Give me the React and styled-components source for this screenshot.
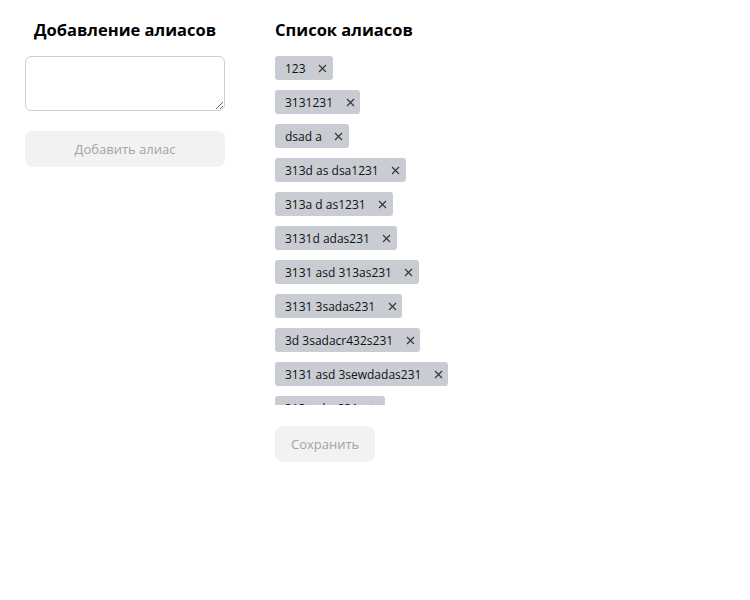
import styled, { createGlobalStyle } from 'styled-components';

const aliases = [
  '123',
  '3131231',
  'dsad a',
  '313d as dsa1231',
  '313a d as1231',
  '3131d adas231',
  '3131 asd 313as231',
  '3131 3sadas231',
  '3d 3sadacr432s231',
  '3131 asd 3sewdadas231',
  '313sadas231',
];

function CrossIcon() {
  return (
    <svg width='9' height='9' viewBox='0 0 9 9'>
      <path d='M1 1 L8 8 M8 1 L1 8' stroke='#333' strokeWidth='1.1' fill='none' />
    </svg>
  );
}

function App() {
  return (
    <>
      <GlobalStyle />
      <S.Page>
        <S.Column>
          <S.Title $center>Добавление алиасов</S.Title>
          <S.TextArea />
          <S.Button $wide disabled>
            Добавить алиас
          </S.Button>
        </S.Column>
        <S.Column>
          <S.Title>Список алиасов</S.Title>
          <S.List>
            {aliases.map((a, i) => (
              <S.Tag key={i}>
                <span>{a}</span>
                <S.Remove>
                  <CrossIcon />
                </S.Remove>
              </S.Tag>
            ))}
          </S.List>
          <S.Button disabled>Сохранить</S.Button>
        </S.Column>
      </S.Page>
    </>
  );
}

// -------------------------------------------------- styling ----------------------------------------------
const GlobalStyle = createGlobalStyle`
  body {
    margin: 0;
    background: #fff;
    font-family: 'Open Sans', 'Noto Sans', sans-serif;
    color: #000;
  }
`;

const S = {};
S.Page = styled.div`
  display: flex;
  gap: 50px;
  padding: 18px 25px;
`;

S.Column = styled.div`
  width: 200px;
  display: flex;
  flex-direction: column;
  align-items: flex-start;
`;

S.Title = styled.h2`
  margin: 0 0 14px;
  width: 100%;
  font-size: 16.5px;
  line-height: 24px;
  font-weight: 700;
  text-align: ${(p) => (p.$center ? 'center' : 'left')};
`;

S.TextArea = styled.textarea`
  box-sizing: border-box;
  width: 200px;
  height: 55px;
  border: 1px solid #cfcfcf;
  border-radius: 6px;
  margin: 0 0 20px;
  padding: 6px 8px;
  font-family: inherit;
  outline: 0;
`;

S.Button = styled.button`
  box-sizing: border-box;
  height: 36px;
  width: ${(p) => (p.$wide ? '100%' : 'auto')};
  padding: 0 16px;
  border: 0;
  border-radius: 8px;
  background: #f2f2f2;
  color: #a3a3a3;
  font-family: inherit;
  font-size: 13px;
`;

S.List = styled.div`
  height: 349px;
  overflow: hidden;
  display: flex;
  flex-direction: column;
  align-items: flex-start;
  gap: 10px;
  margin-bottom: 21px;
  width: 300px;
`;

S.Tag = styled.div`
  flex-shrink: 0;
  display: flex;
  align-items: center;
  gap: 12px;
  height: 24px;
  padding: 0 5px 0 10px;
  background: #c9cdd3;
  border-radius: 3px;
  font-size: 12px;
  color: #111;
`;

S.Remove = styled.span`
  display: flex;
  align-items: center;
  justify-content: center;
  width: 10px;
`;

export default App;
